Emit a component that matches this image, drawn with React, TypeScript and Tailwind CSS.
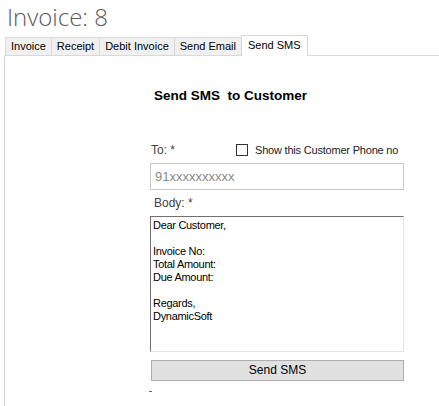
import React from "react";

const tabs = ["Invoice", "Receipt", "Debit Invoice", "Send Email", "Send SMS"];

export default function App() {
  const body = [
    "Dear Customer,",
    "",
    "Invoice No:",
    "Total Amount:",
    "Due Amount:",
    "",
    "Regards,",
    "DynamicSoft",
  ];

  return (
    <div className="w-[439px] h-[406px] bg-white overflow-hidden flex flex-col font-['Liberation_Sans',Arial,sans-serif]">
      {/* Title */}
      <div className="h-[35px] pl-[7px] text-[24px] leading-[33px] font-light text-[#5a5a5a] font-['Open_Sans',sans-serif]">
        Invoice: 8
      </div>

      {/* Tabs */}
      <div className="flex items-end pl-[5px] h-[20px] relative z-10">
        {tabs.map((t) => {
          const active = t === "Send SMS";
          return active ? (
            <div
              key={t}
              className="h-[21px] -mb-px px-[6px] bg-white border border-b-0 border-[#d9d9d9] text-[11px] leading-[19px] text-black whitespace-nowrap"
            >
              {t}
            </div>
          ) : (
            <div
              key={t}
              className="h-[18px] px-[5px] bg-[#f0f0f0] border border-r-0 border-b-0 border-[#d9d9d9] text-[11px] leading-[17px] text-black whitespace-nowrap"
            >
              {t}
            </div>
          );
        })}
      </div>

      {/* Panel */}
      <div className="flex-1 ml-[4px] border-l border-t border-[#d9d9d9] flex flex-col">
        <div className="pl-[149px] pt-[32px] text-[13.5px] font-bold text-black leading-[15px] whitespace-pre">
          Send SMS  to Customer
        </div>

        <div className="ml-[145px] w-[254px] mt-[37px] flex flex-col">
          <div className="flex items-center h-[20px]">
            <span className="pl-[1px] text-[12px] text-[#444] w-[86px]">To: *</span>
            <span className="w-[12px] h-[12px] border border-[#333] bg-white"></span>
            <span className="ml-[7px] text-[11px] text-[#222] whitespace-nowrap tracking-[-0.2px]">
              Show this Customer Phone no
            </span>
          </div>

          <div className="mt-[3px] h-[27px] border border-[#c8c8c8] flex items-center pl-[4px] text-[13px] text-[#8a8a8a]">
            91xxxxxxxxxx
          </div>

          <div className="mt-[6px] pl-[4px] h-[18px] text-[12px] text-[#444] leading-[14px]">Body: *</div>

          <div className="mt-[2px] h-[136px] border border-[#e3e3e3] border-t-[#707070] border-l-[#707070] pl-[2px] pt-[2px] text-[11px] leading-[13px] text-black">
            {body.map((l, i) => (
              <div key={i} className="h-[13px] tracking-[-0.3px]">
                {l}
              </div>
            ))}
          </div>

          <button className="mt-[8px] ml-[1px] w-[253px] h-[21px] bg-[#e1e1e1] border border-[#adadad] text-[12px] text-black leading-[19px]">
            Send SMS
          </button>

          <div className="mt-[10px] ml-[-1px] w-[3px] h-px bg-[#666]"></div>
        </div>
      </div>
    </div>
  );
}
